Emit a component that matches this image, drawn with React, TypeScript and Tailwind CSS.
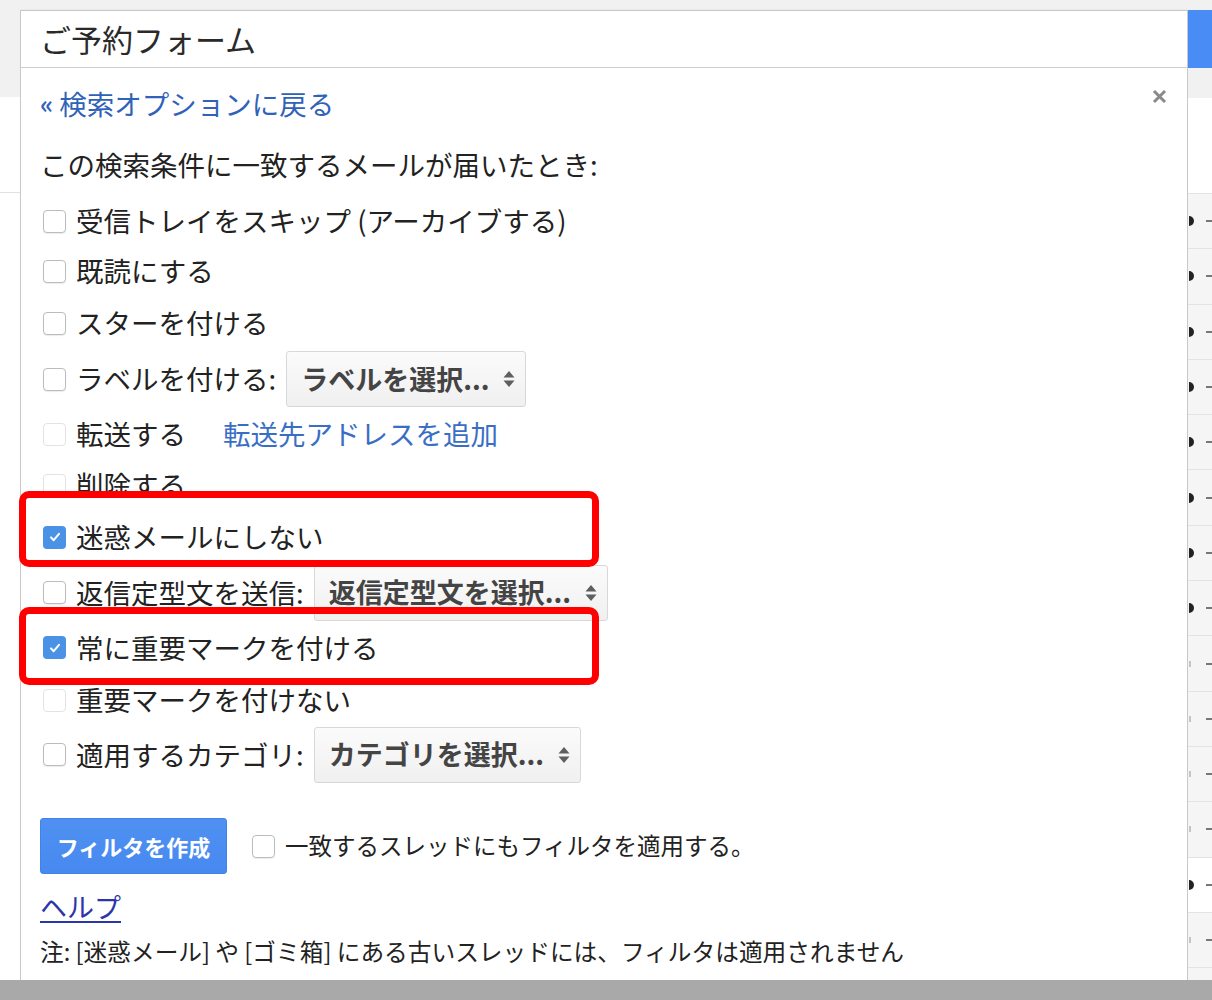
import clsx from "clsx"

const rows = [
    { h: "h-[50px]", text: "受信トレイをスキップ (アーカイブする)" },
    { h: "h-[50px]", text: "既読にする" },
    { h: "h-[54px]", text: "スターを付ける" },
    { h: "h-[58px]", text: "ラベルを付ける:", pick: "ラベルを選択...", w: "w-[240px]" },
    { h: "h-[52px]", text: "転送する", faint: true, link: "転送先アドレスを追加" },
    { h: "h-[50px]", text: "削除する", faint: true },
    { h: "h-[54px]", text: "迷惑メールにしない", checked: true },
    { h: "h-[57px]", text: "返信定型文を送信:", pick: "返信定型文を選択...", w: "w-[294px]" },
    { h: "h-[53px]", text: "常に重要マークを付ける", checked: true },
    { h: "h-[52px]", text: "重要マークを付けない", faint: true },
    { h: "h-[57px]", text: "適用するカテゴリ:", pick: "カテゴリを選択...", w: "w-[267px]" },
]

function Box({ checked, faint }: { checked?: boolean; faint?: boolean }) {
    if (checked)
        return (
            <span className="ml-[3px] flex h-[23px] w-[23px] shrink-0 items-center justify-center rounded-[4px] bg-[#4a92e6]">
                <svg width="14" height="14" viewBox="0 0 14 14">
                    <path d="M3 7.4l2.7 2.8L11 3.8" stroke="white" strokeWidth="2" fill="none" strokeLinecap="round" strokeLinejoin="round" />
                </svg>
            </span>
        )
    return (
        <span
            className={clsx(
                "ml-[3px] h-[23px] w-[23px] shrink-0 rounded-[4px] border bg-white",
                faint ? "border-[#e3e3e3]" : "border-[#bcbcbc] shadow-[0_1px_1px_rgba(0,0,0,0.08)]"
            )}
        />
    )
}

function Arrows() {
    return (
        <svg width="14" height="20" viewBox="0 0 14 20">
            <path d="M1.5 8.5L7 2l5.5 6.5z M1.5 11.5L7 18l5.5-6.5z" fill="#5f5f5f" />
        </svg>
    )
}

function Pick({ text, w }: { text: string; w: string }) {
    return (
        <div
            className={clsx(
                "ml-[10px] flex h-[56px] items-center justify-between rounded-[3px] border border-[#d8d8d8] bg-linear-to-b from-[#fbfbfb] to-[#f0f0f0] pl-[14px] pr-[9px] text-[27px] font-bold text-[#444]",
                w
            )}
        >
            <span>{text}</span>
            <Arrows />
        </div>
    )
}

function SideRows() {
    const bold = [true, true, true, true, true, true, true, true, false, false, false, false, true, false, false]
    return (
        <>
            {bold.map((b, i) => (
                <div
                    key={i}
                    className={clsx(
                        "flex h-[55.3px] shrink-0 items-center justify-between border-t border-[#e3e3e3]",
                        i === 12 ? "bg-white" : "bg-[#f5f5f5]"
                    )}
                >
                    {b ? <span className="ml-[1px] h-[10px] w-[5px] rounded-r-full bg-[#222]" /> : <span className="ml-[1px] h-[6px] w-[2px] bg-[#c4c4c4]" />}
                    <span className="h-[2px] w-[6px] bg-[#777]" />
                </div>
            ))}
        </>
    )
}

export default function App() {
    return (
        <div className="flex h-[1000px] w-[1212px] flex-col overflow-hidden bg-white font-['Noto_Sans_CJK_JP',sans-serif] text-[#222]">
            <div className="relative flex h-[980px] overflow-hidden">
                {/* left strip */}
                <div className="flex w-[20px] shrink-0 flex-col">
                    <div className="h-[97px] bg-[#f1f1f1]" />
                    <div className="h-[96px] border-b border-[#e2e2e2] bg-white" />
                </div>

                {/* dialog */}
                <div className="flex w-[1168px] shrink-0 flex-col">
                    <div className="h-[10px] shrink-0 bg-[#f1f1f1]" />
                    <div className="flex flex-1 flex-col border-x border-t border-[#c9c9c9] bg-white shadow-[1px_0_2px_rgba(0,0,0,0.08)]">
                        <div className="flex h-[57px] shrink-0 items-center border-b border-[#cfcfcf] pl-[19px] text-[31px] text-[#2a2a2a]">
                            ご予約フォーム
                        </div>
                        <div className="relative flex flex-col px-[19px]">
                            <svg className="absolute right-[20px] top-[21px]" width="15" height="15" viewBox="0 0 15 15">
                                <path d="M2 2l11 11M13 2L2 13" stroke="#8a8a8a" strokeWidth="3" />
                            </svg>
                            <div className="mt-[12px] flex h-[48px] items-center text-[27.5px] text-[#2f62b8]">
                                <span className="mr-[6px] text-[25px] font-bold">«</span>検索オプションに戻る
                            </div>
                            <div className="mt-[13px] flex h-[48px] items-center text-[27.5px]">
                                この検索条件に一致するメールが届いたとき:
                            </div>
                            <div className="mt-[7px] flex flex-col">
                                {rows.map((r) => (
                                    <div key={r.text} className={clsx("flex items-center text-[27.5px]", r.h)}>
                                        <Box checked={r.checked} faint={r.faint} />
                                        <span className="ml-[10px]">{r.text}</span>
                                        {r.pick && <Pick text={r.pick} w={r.w!} />}
                                        {r.link && <span className="ml-[37px] text-[#3a6ec4]">{r.link}</span>}
                                    </div>
                                ))}
                            </div>
                            <div className="mt-[35px] flex items-center">
                                <div className="flex h-[56px] w-[187px] items-center justify-center rounded-[3px] border border-[#3f82ec] bg-linear-to-b from-[#4f90f2] to-[#4789ef] text-[22px] font-bold text-white">
                                    フィルタを作成
                                </div>
                                <span className="ml-[25px] h-[23px] w-[23px] rounded-[4px] border border-[#bcbcbc] shadow-[0_1px_1px_rgba(0,0,0,0.08)]" />
                                <span className="ml-[10px] text-[23.5px]">一致するスレッドにもフィルタを適用する。</span>
                            </div>
                            <div className="mt-[10px] flex h-[46px] items-center">
                                <span className="text-[27px] text-[#2b36a8] underline decoration-[2px] underline-offset-[3px]">ヘルプ</span>
                            </div>
                            <div className="flex h-[44px] items-center text-[23.7px]">
                                注: [迷惑メール] や [ゴミ箱] にある古いスレッドには、フィルタは適用されません
                            </div>
                        </div>
                    </div>
                </div>

                {/* right strip */}
                <div className="flex w-[24px] shrink-0 flex-col">
                    <div className="h-[10px] shrink-0 bg-[#f1f1f1]" />
                    <div className="h-[58px] shrink-0 bg-[#4a8cf5]" />
                    <div className="h-[30px] shrink-0 bg-[#f1f1f1]" />
                    <div className="h-[95px] shrink-0 bg-white" />
                    <SideRows />
                </div>

                {/* annotation boxes */}
                <div className="absolute left-[19px] top-[491px] h-[76px] w-[580px] rounded-[10px] border-[7px] border-[#ff0000]" />
                <div className="absolute left-[19px] top-[607px] h-[78px] w-[580px] rounded-[10px] border-[7px] border-[#ff0000]" />
            </div>
            <div className="h-[20px] shrink-0 bg-[#a9a9a9]" />
        </div>
    )
}
